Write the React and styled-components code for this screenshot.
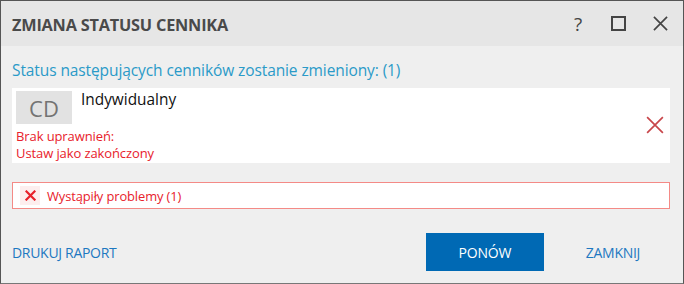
import React from 'react';
import styled, { createGlobalStyle } from 'styled-components';

const GlobalStyle = createGlobalStyle`
  html, body {
    margin: 0;
    padding: 0;
    background: #efefef;
  }
  body {
    font-family: "Open Sans", "Noto Sans", sans-serif;
  }
`

const Window = styled.div`
  box-sizing: border-box;
  width: 684px;
  height: 284px;
  border: 1px solid #555;
  border-bottom-color: #777;
  background: #efefef;
  display: flex;
  flex-direction: column;
`
const TitleBar = styled.div`
  height: 45px;
  background: #e6e6e6;
  display: flex;
  align-items: center;
  padding: 0 14px 0 11px;
`
const Title = styled.div`
  flex: 1;
  font-size: 16.3px;
  font-weight: 700;
  color: #4a4a4a;
  letter-spacing: -0.2px;
  padding-top: 2px;
`
const TitleButton = styled.button`
  border: 0;
  background: none;
  padding: 0;
  margin-left: ${p => p.gap}px;
  width: 18px;
  height: 18px;
  display: flex;
  align-items: center;
  justify-content: center;
  color: #444;
  font-size: 19px;
  font-family: "Open Sans", sans-serif;
`
const Body = styled.div`
  flex: 1;
  padding: 15px 13px 0 11px;
  display: flex;
  flex-direction: column;
`
const Lead = styled.div`
  font-size: 15.5px;
  color: #2a9ac8;
  letter-spacing: -0.1px;
  line-height: 19px;
`
const Card = styled.div`
  margin-top: 8px;
  height: 75px;
  background: #fff;
  display: flex;
  padding: 3px 6px 0 4px;
  box-sizing: border-box;
`
const CardMain = styled.div`
  flex: 1;
  display: flex;
  flex-direction: column;
`
const CardTop = styled.div`
  display: flex;
  gap: 9px;
`
const Badge = styled.div`
  width: 56px;
  height: 33px;
  background: #e2e2e2;
  color: #737373;
  font-size: 22px;
  display: flex;
  align-items: center;
  justify-content: center;
`
const Name = styled.div`
  font-size: 15.4px;
  color: #111;
  line-height: 19px;
  margin-top: -1px;
`
const ErrorText = styled.div`
  margin-top: 4px;
  font-size: 13px;
  line-height: 17px;
  color: #e8212b;
  letter-spacing: -0.1px;
`
const RemoveIcon = styled.div`
  align-self: center;
  display: flex;
  margin-top: -4px;
`
const Alert = styled.div`
  margin-top: 19px;
  height: 27px;
  box-sizing: border-box;
  border: 1px solid #f48a86;
  background: #fff;
  display: flex;
  align-items: center;
  padding-left: 7px;
  gap: 7px;
`
const AlertIcon = styled.div`
  width: 20px;
  height: 19px;
  background: #fdeeee;
  display: flex;
  align-items: center;
  justify-content: center;
`
const AlertText = styled.div`
  font-size: 12.9px;
  color: #e8212b;
  letter-spacing: -0.1px;
`
const Footer = styled.div`
  margin-top: 24px;
  display: flex;
  align-items: center;
`
const LinkButton = styled.button`
  border: 0;
  background: none;
  padding: 0;
  font-family: "Open Sans", sans-serif;
  font-size: 14px;
  color: #1d78c1;
  letter-spacing: -0.3px;
  margin-right: ${p => p.right || 0}px;
`
const Spacer = styled.div`
  flex: 1;
`
const PrimaryButton = styled.button`
  width: 118px;
  height: 38px;
  border: 0;
  background: #0069b4;
  color: #fff;
  font-family: "Open Sans", sans-serif;
  font-size: 14px;
  letter-spacing: -0.2px;
  margin-right: 42px;
`

const Cross = ({ size, color, width }) => (
  <svg width={size} height={size} viewBox="0 0 16 16">
    <path d="M1 1L15 15M15 1L1 15" stroke={color} strokeWidth={width} fill="none" />
  </svg>
)

const App = () => (
  <>
    <GlobalStyle />
    <Window>
      <TitleBar>
        <Title>ZMIANA STATUSU CENNIKA</Title>
        <TitleButton gap={0}>?</TitleButton>
        <TitleButton gap={22}>
          <svg width="15" height="15" viewBox="0 0 15 15">
            <rect x="1" y="1" width="13" height="13" stroke="#444" strokeWidth="2" fill="none" />
          </svg>
        </TitleButton>
        <TitleButton gap={24}>
          <Cross size={15} color="#444" width={1.8} />
        </TitleButton>
      </TitleBar>
      <Body>
        <Lead>Status następujących cenników zostanie zmieniony: (1)</Lead>
        <Card>
          <CardMain>
            <CardTop>
              <Badge>CD</Badge>
              <Name>Indywidualny</Name>
            </CardTop>
            <ErrorText>
              Brak uprawnień:
              <br />
              Ustaw jako zakończony
            </ErrorText>
          </CardMain>
          <RemoveIcon>
            <Cross size={18} color="#c8464a" width={1.5} />
          </RemoveIcon>
        </Card>
        <Alert>
          <AlertIcon>
            <Cross size={11} color="#e8212b" width={3.2} />
          </AlertIcon>
          <AlertText>Wystąpiły problemy (1)</AlertText>
        </Alert>
        <Footer>
          <LinkButton>DRUKUJ RAPORT</LinkButton>
          <Spacer />
          <PrimaryButton>PONÓW</PrimaryButton>
          <LinkButton right={30}>ZAMKNIJ</LinkButton>
        </Footer>
      </Body>
    </Window>
  </>
)

export default App;
